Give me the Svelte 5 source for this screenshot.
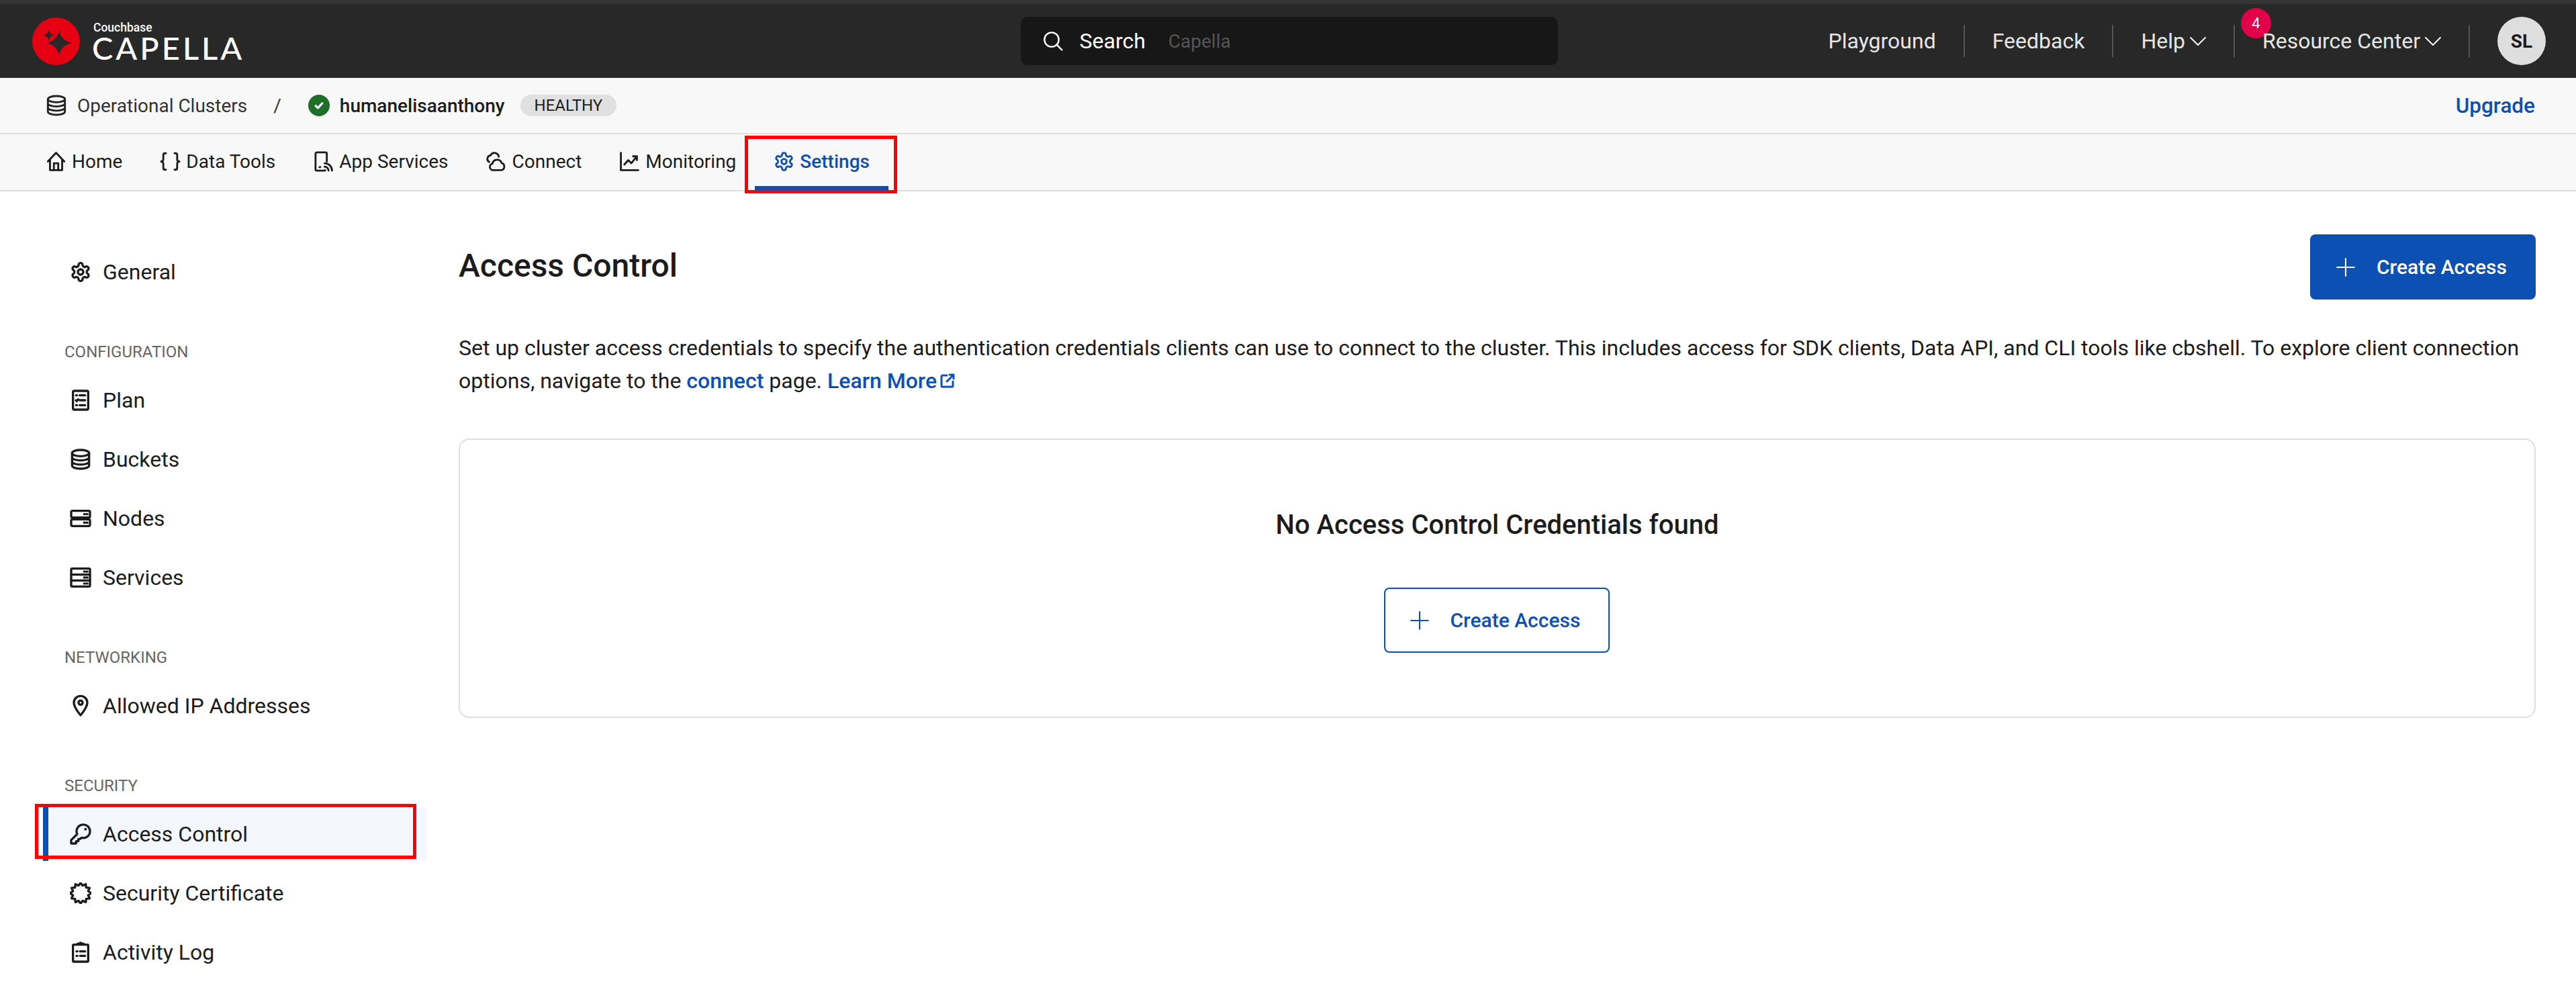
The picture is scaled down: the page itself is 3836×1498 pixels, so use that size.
<script>
  const certPoints = Array.from({ length: 24 }, (_, i) => {
    const r = i % 2 ? 8.8 : 11.6;
    const a = (i * Math.PI) / 12 - Math.PI / 2;
    return `${(12 + r * Math.cos(a)).toFixed(2)},${(12 + r * Math.sin(a)).toFixed(2)}`;
  }).join(' ');

  const icons = {
    gear: '<path d="M12.22 2h-.44a2 2 0 0 0-2 2v.18a2 2 0 0 1-1 1.73l-.43.25a2 2 0 0 1-2 0l-.15-.08a2 2 0 0 0-2.73.73l-.22.38a2 2 0 0 0 .73 2.73l.15.1a2 2 0 0 1 1 1.72v.51a2 2 0 0 1-1 1.74l-.15.09a2 2 0 0 0-.73 2.73l.22.38a2 2 0 0 0 2.73.73l.15-.08a2 2 0 0 1 2 0l.43.25a2 2 0 0 1 1 1.73V20a2 2 0 0 0 2 2h.44a2 2 0 0 0 2-2v-.18a2 2 0 0 1 1-1.73l.43-.25a2 2 0 0 1 2 0l.15.08a2 2 0 0 0 2.73-.73l.22-.39a2 2 0 0 0-.73-2.73l-.15-.08a2 2 0 0 1-1-1.74v-.5a2 2 0 0 1 1-1.74l.15-.09a2 2 0 0 0 .73-2.73l-.22-.38a2 2 0 0 0-2.73-.73l-.15.08a2 2 0 0 1-2 0l-.43-.25a2 2 0 0 1-1-1.73V4a2 2 0 0 0-2-2z"/><circle cx="12" cy="12" r="3"/>',
    plan: '<rect x="3.500" y="1.500" width="17" height="21" rx="1.500"/><path d="M7 6.500h1M11 6.500h6M6.800 12l1 1 1.400-2M11 12h6M7 17.500h1M11 17.500h6"/>',
    db: '<ellipse cx="12" cy="5" rx="9.500" ry="3.500"/><path d="M2.500 5v14c0 1.900 4.200 3.500 9.500 3.500s9.500-1.600 9.500-3.500V5M2.500 9.700c0 1.900 4.200 3.500 9.500 3.500s9.500-1.600 9.500-3.500M2.500 14.400c0 1.900 4.200 3.500 9.500 3.500s9.500-1.600 9.500-3.500"/>',
    nodes: '<rect x="1.500" y="3.500" width="21" height="7.500" rx="1.500"/><rect x="1.500" y="13" width="21" height="7.500" rx="1.500"/><path d="M16 7.200h.8M18.800 7.200h.8M16 16.700h.8M18.800 16.700h.8"/>',
    services: '<rect x="1.500" y="2" width="21" height="20" rx="1"/><path d="M1.500 8.700h21M1.500 15.300h21M16 5.400h.8M18.800 5.400h.8M16 12h.8M18.800 12h.8M16 18.700h.8M18.800 18.700h.8"/>',
    pin: '<path d="M12 22.500s-7.500-8.500-7.500-14a7.500 7.500 0 0 1 15 0c0 5.500-7.500 14-7.500 14z"/><circle cx="12" cy="8.500" r="2.300"/>',
    key: '<path d="M8.200 12L1.500 18.700v3.800H7V20h2.500v-2.500h2L13 16.100A7.500 7.500 0 1 0 8.200 12z"/><circle cx="17.500" cy="6.500" r="1.500" fill="currentColor" stroke="none"/>',
    cert: `<polygon points="${certPoints}"/>`,
    clip: '<rect x="3.500" y="3.500" width="17" height="19" rx="1"/><path d="M8.500 3.500V2.500h2.500a1 1 0 0 1 2 0h2.500v1M7.500 11h1M11.500 11h5.500M7.500 16h1M11.500 16h5.500"/>',
    home: '<path d="M2.500 12L12 2l9.500 10M5 9.500V22h14V9.500"/><path d="M9.500 22v-8h5v8"/>',
    braces: '<path d="M7 2.500H6c-1.500 0-2 1-2 2v5c0 1.300-.7 2.300-2.500 2.500 1.800.2 2.500 1.200 2.500 2.500v5c0 1 .5 2 2 2h1M17 2.500h1c1.500 0 2 1 2 2v5c0 1.300.7 2.300 2.500 2.500-1.800.2-2.500 1.200-2.500 2.500v5c0 1-.5 2-2 2h-1"/>',
    phone: '<path d="M13 22.500H4.500A1.500 1.500 0 0 1 3 21V3a1.500 1.500 0 0 1 1.500-1.500h10A1.500 1.500 0 0 1 16 3v9M7.500 18.500h1"/><path d="M14 22.500V22M18 22.500a4.500 4.500 0 0 0-4.500-4.500M22 22.500a8.500 8.500 0 0 0-8.500-8.500"/>',
    cloud: '<path d="M3.500 12.500A4 4 0 0 1 5 5a5 5 0 0 1 9.500 1.500"/><path d="M8 22a3.800 3.800 0 0 1-.8-7.500 5.500 5.500 0 0 1 10.600-.8A4.300 4.300 0 0 1 17.500 22z"/>',
    chart: '<path d="M2 2v20h20"/><path d="M6 15.500l4.500-5 3.500 3.500 6-7.500M16 6h4.500v4.500"/>',
    check: '<path d="M7.500 12.500l3 3 6-6.500"/>',
    search: '<circle cx="10.500" cy="10.500" r="8"/><path d="M16 16l6 6"/>',
    chev: '<path d="M1 7l11 11L23 7"/>',
    plus: '<path d="M12 1v22M1 12h22"/>',
    ext: '<path d="M11 4H4.500A1.500 1.500 0 0 0 3 5.500v14A1.500 1.500 0 0 0 4.500 21h14a1.500 1.500 0 0 0 1.500-1.500V13"/><path d="M11 13l10-10M15 3h6v6"/>'
  };

  const tabs = [
    { label: 'Home', icon: 'home' },
    { label: 'Data Tools', icon: 'braces' },
    { label: 'App Services', icon: 'phone' },
    { label: 'Connect', icon: 'cloud' },
    { label: 'Monitoring', icon: 'chart' },
    { label: 'Settings', icon: 'gear', active: true }
  ];

  const groups = [
    { items: [{ label: 'General', icon: 'gear' }] },
    { title: 'CONFIGURATION', items: [
      { label: 'Plan', icon: 'plan' },
      { label: 'Buckets', icon: 'db' },
      { label: 'Nodes', icon: 'nodes' },
      { label: 'Services', icon: 'services' }
    ] },
    { title: 'NETWORKING', items: [{ label: 'Allowed IP Addresses', icon: 'pin' }] },
    { title: 'SECURITY', items: [
      { label: 'Access Control', icon: 'key', active: true },
      { label: 'Security Certificate', icon: 'cert' },
      { label: 'Activity Log', icon: 'clip' }
    ] }
  ];
</script>

{#snippet icon(name, cls = '')}
  <svg class="ic {cls}" viewBox="0 0 24 24" aria-hidden="true">{@html icons[name]}</svg>
{/snippet}

<div class="page">
  <header class="top">
    <div class="brand">
      <svg class="logo" viewBox="0 0 71 71" aria-hidden="true">
        <circle cx="35.500" cy="35.500" r="35.500" fill="#e60012" />
        <path fill="#282828" d="M40 17Q41 33 58 38Q41 43 40 58Q39 43 22 38Q39 33 40 17z" />
        <path fill="#282828" d="M24.500 18Q25 25 33 26.500Q25 28 24.500 35Q24 28 16 26.500Q24 25 24.500 18z" />
      </svg>
      <div class="wordmark">
        <span class="cb">Couchbase</span>
        <span class="cap">CAPELLA</span>
      </div>
    </div>
    <div class="search">
      {@render icon('search', 'sic')}
      <span class="s1">Search</span>
      <span class="s2">Capella</span>
    </div>
    <nav class="topnav">
      <span>Playground</span>
      <i class="sep"></i>
      <span>Feedback</span>
      <i class="sep"></i>
      <span class="dd">Help{@render icon('chev', 'cv')}</span>
      <i class="sep"></i>
      <span class="dd rc"><b class="badge">4</b>Resource Center{@render icon('chev', 'cv')}</span>
      <i class="sep"></i>
      <span class="avatar">SL</span>
    </nav>
  </header>

  <div class="crumbs">
    <div class="crumb-left">
      {@render icon('db', 'cdb')}
      <span class="oc">Operational Clusters</span>
      <span class="slash">/</span>
      <span class="ok"><svg viewBox="0 0 24 24" class="ic okc">{@html icons.check}</svg></span>
      <span class="cname">humanelisaanthony</span>
      <span class="pill">HEALTHY</span>
    </div>
    <a class="upgrade" href="#upgrade">Upgrade</a>
  </div>

  <div class="tabs">
    {#each tabs as t}
      <div class="tab" class:active={t.active}>
        {@render icon(t.icon, 'tic')}
        <span>{t.label}</span>
        {#if t.active}<i class="redbox tabbox"></i>{/if}
      </div>
    {/each}
  </div>

  <div class="body">
    <aside class="side">
      {#each groups as g}
        <section class="group">
          {#if g.title}<h4>{g.title}</h4>{/if}
          {#each g.items as it}
            <div class="row" class:active={it.active}>
              {@render icon(it.icon, 'sideic')}
              <span>{it.label}</span>
              {#if it.active}<i class="redbox rowbox"></i>{/if}
            </div>
          {/each}
        </section>
      {/each}
    </aside>

    <main class="main">
      <div class="head">
        <h1>Access Control</h1>
        <button class="btn solid">{@render icon('plus', 'pl')}<span>Create Access</span></button>
      </div>
      <p class="desc">Set up cluster access credentials to specify the authentication credentials clients can use to connect to the cluster. This includes access for SDK clients, Data API, and CLI tools like cbshell. To explore client connection options, navigate to the <a href="#connect">connect</a> page. <a href="#more">Learn More</a><svg class="ic ex" viewBox="0 0 24 24">{@html icons.ext}</svg></p>
      <div class="card">
        <h2>No Access Control Credentials found</h2>
        <button class="btn outline">{@render icon('plus', 'pl')}<span>Create Access</span></button>
      </div>
    </main>
  </div>
</div>

<style>
  :global(body) { margin: 0; background: #fff; }
  .page { width: 3836px; height: 1498px; overflow: hidden; font-family: Roboto, "Liberation Sans", sans-serif; color: #1c1c1c; }
  .ic { fill: none; stroke: currentColor; stroke-width: 2.200; stroke-linecap: round; stroke-linejoin: round; flex: none; display: block; }

  .top { height: 116px; box-sizing: border-box; border-top: 6px solid #343434; background: #282828; display: grid; grid-template-columns: 1fr 800px 1fr; align-items: center; padding: 0 45px 0 48px; }
  .brand { display: flex; align-items: center; gap: 18px; }
  .logo { width: 71px; height: 71px; flex: none; }
  .wordmark { display: flex; flex-direction: column; color: #fff; }
  .cb { font-size: 17.500px; font-weight: 500; line-height: 20px; margin-left: 2px; }
  .cap { font-family: Lato, sans-serif; font-size: 47px; line-height: 40px; font-weight: 500; letter-spacing: 4px; }
  .search { height: 72px; background: #171717; border-radius: 10px; display: flex; align-items: center; color: #fff; font-size: 32px; }
  .sic { width: 32px; height: 32px; margin-left: 32px; stroke-width: 1.800; }
  .s1 { margin-left: 24px; }
  .s2 { margin-left: 34px; color: #555; font-size: 28px; }
  .topnav { display: flex; align-items: center; justify-content: flex-end; gap: 41px; color: #e6e6e6; font-size: 32px; }
  .sep { width: 2px; height: 48px; background: #555; }
  .dd { display: flex; align-items: center; gap: 7px; }
  .rc { position: relative; isolation: isolate; }
  .cv { width: 24px; height: 24px; stroke-width: 1.800; color: #fff; }
  .badge { position: absolute; z-index: -1; left: -32px; top: -30px; width: 45px; height: 45px; border-radius: 50%; background: #e2004b; color: #fff; font-size: 22px; font-weight: 400; display: flex; align-items: center; justify-content: center; }
  .avatar { width: 72px; height: 72px; border-radius: 50%; background: #dedede; color: #1c1c1c; font-size: 28px; font-weight: 700; display: flex; align-items: center; justify-content: center; }

  .crumbs { height: 82px; background: #f8f8f8; border-bottom: 2px solid #dedede; display: flex; align-items: center; justify-content: space-between; padding: 0 61px 0 68px; }
  .crumb-left { display: flex; align-items: center; }
  .cdb { width: 32px; height: 32px; color: #222; }
  .oc { margin-left: 15px; font-size: 28px; color: #333; }
  .slash { margin-left: 39px; font-size: 28px; color: #333; }
  .ok { margin-left: 40px; width: 32px; height: 32px; border-radius: 50%; background: #1f6f2b; display: flex; align-items: center; justify-content: center; }
  .okc { width: 26px; height: 26px; color: #fff; stroke-width: 3; }
  .cname { margin-left: 15px; font-size: 28px; font-weight: 500; }
  .pill { margin-left: 23px; height: 32px; padding: 0 21px; border-radius: 16px; background: #e0e0e0; font-size: 24px; font-weight: 400; display: flex; align-items: center; }
  .upgrade { color: #0d50b3; font-weight: 500; font-size: 31.500px; text-decoration: none; }

  .tabs { height: 83px; background: #f8f8f8; border-bottom: 2px solid #dedede; display: flex; padding-left: 40px; }
  .tab { position: relative; display: flex; align-items: center; gap: 8px; padding: 0 28px 3px; font-size: 28px; height: 83px; box-sizing: border-box; }
  .tic { width: 31px; height: 31px; }
  .tab.active { color: #0d50b3; font-weight: 500; }
  .tab.active::after { content: ""; position: absolute; left: 0; right: 0; bottom: 0; height: 6px; background: #0d50b3; }
  .redbox { position: absolute; box-sizing: border-box; border: 5px solid #ff0000; pointer-events: none; }
  .tabbox { left: -15px; right: -13px; top: 2px; bottom: -5px; }

  .body { display: flex; }
  .side { width: 683px; flex: none; box-sizing: border-box; padding: 80px 48px 0 64px; }
  .group + .group { margin-top: 63px; }
  h4 { margin: 0 0 16px; padding-left: 32px; font-size: 24px; line-height: 32px; font-weight: 400; color: #666; }
  .row { position: relative; height: 80px; margin-bottom: 8px; padding-left: 40px; display: flex; align-items: center; gap: 17px; font-size: 32px; }
  .row.active { background: #f4f7fe; box-shadow: inset 8px 0 0 #0d50b3; }
  .sideic { width: 32px; height: 32px; stroke-width: 2.500; }
  .rowbox { left: -12px; right: 15px; top: -5px; bottom: 3px; }

  .main { flex: 1; padding: 64px 60px 0 0; min-width: 0; }
  .head { display: flex; align-items: center; justify-content: space-between; }
  h1 { margin: 0; font-size: 48px; line-height: 56px; font-weight: 500; color: #1c1c1c; transform: translateY(-2px); }
  .btn { font-family: inherit; font-size: 30px; font-weight: 500; height: 97px; border-radius: 8px; display: flex; align-items: center; gap: 32px; box-sizing: border-box; cursor: pointer; }
  .pl { width: 28px; height: 28px; stroke-width: 1.800; }
  .solid { width: 336px; padding-left: 39px; background: #0d50b3; color: #fff; border: 0; }
  .outline { width: 336px; padding-left: 37px; margin-left: -2px; background: #fff; color: #0d50b3; border: 2px solid #0d50b3; }
  .desc { margin: 48px 0 61px; font-size: 32px; line-height: 49px; color: #1c1c1c; }
  .desc a { color: #0d50b3; font-weight: 500; text-decoration: none; }
  .ex { display: inline-block; width: 24px; height: 24px; color: #0d50b3; margin-left: 4px; vertical-align: -1px; stroke-width: 3; }
  .card { height: 416px; box-sizing: border-box; border: 2px solid #dedede; border-radius: 16px; padding-top: 103px; display: flex; flex-direction: column; align-items: center; }
  h2 { margin: 0 0 69px; font-size: 40px; line-height: 48px; font-weight: 500; color: #1c1c1c; }
</style>
